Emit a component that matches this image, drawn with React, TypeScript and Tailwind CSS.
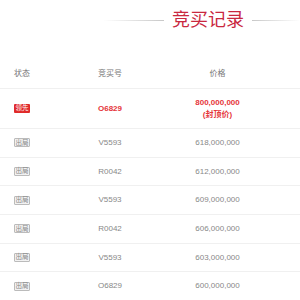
const rows = [
  { status: 'lead', no: 'O6829', price: '800,000,000', cap: true },
  { status: 'out', no: 'V5593', price: '618,000,000' },
  { status: 'out', no: 'R0042', price: '612,000,000' },
  { status: 'out', no: 'V5593', price: '609,000,000' },
  { status: 'out', no: 'R0042', price: '606,000,000' },
  { status: 'out', no: 'V5593', price: '603,000,000' },
  { status: 'out', no: 'O6829', price: '600,000,000' },
];

const font = { fontFamily: '"Liberation Sans", "Noto Sans CJK SC", sans-serif' };

export default function App() {
  return (
    <div className="w-[300px] h-[300px] overflow-hidden bg-white" style={font}>
      <div className="h-[40px] flex items-center pl-[103px]">
        <div className="w-[61px] h-px bg-gradient-to-r from-white to-[#c8c8c8]" />
        <h1 className="mx-[8px] text-[18px] leading-none text-[#c9283f] tracking-[0px]">竞买记录</h1>
        <div className="flex-1 h-px bg-gradient-to-r from-[#c8c8c8] to-white" />
      </div>

      <div className="mt-[20px] grid grid-cols-[44px_132px_83px] items-center h-[29px] border-b border-[#f0f0f0] text-[8px] text-[#777]">
        <div className="text-center">状态</div>
        <div className="text-center">竞买号</div>
        <div className="text-center">价格</div>
      </div>

      {rows.map((r, i) => (
        <div
          key={i}
          className={`grid grid-cols-[44px_132px_83px] items-center border-b border-[#f0f0f0] text-[8px] ${
            r.cap ? 'h-[40px] text-[#e5353a] font-bold' : 'h-[28.7px] text-[#888]'
          }`}
        >
          <div className="flex justify-center">
            {r.status === 'lead' ? (
              <span className="w-[16px] h-[9px] flex items-center justify-center bg-[#e02a2a] text-white text-[6.5px] font-normal leading-none rounded-[1px]">
                领先
              </span>
            ) : (
              <span className="w-[16px] h-[9px] flex items-center justify-center bg-[#f2f2f2] border border-[#bbb] text-[#888] text-[6.5px] leading-none rounded-[1px]">
                出局
              </span>
            )}
          </div>
          <div className="text-center">{r.no}</div>
          <div className="text-center leading-[12px]">
            <div>{r.price}</div>
            {r.cap && <div>(封顶价)</div>}
          </div>
        </div>
      ))}
    </div>
  );
}
